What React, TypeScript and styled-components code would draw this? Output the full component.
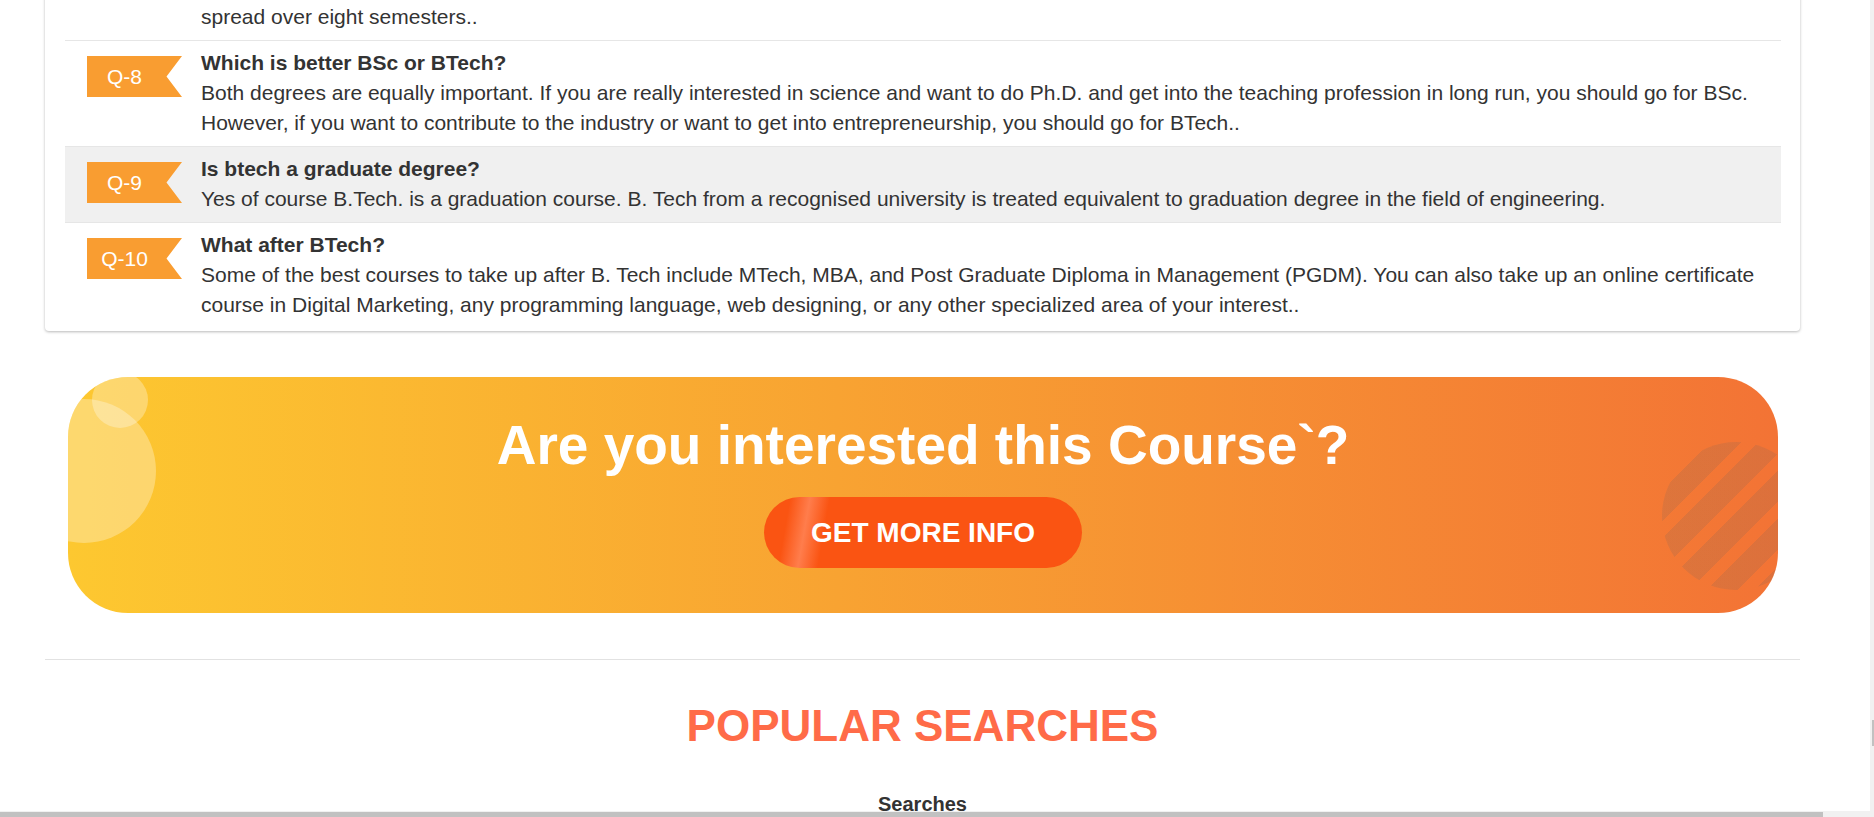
import React from "react";
import styled, { createGlobalStyle } from "styled-components";

const GlobalStyle = createGlobalStyle`
  html, body {
    margin: 0;
    padding: 0;
    background: #ffffff;
    overflow: hidden;
  }
  body {
    font-family: "Liberation Sans", Arial, Helvetica, sans-serif;
    color: #333333;
  }
  * {
    box-sizing: border-box;
  }
`;

const Page = styled.main`
  width: 1755px;
  margin: -65px 0 0 45px;
  display: flex;
  flex-direction: column;
`;

const FaqCard = styled.div`
  background: #ffffff;
  border-radius: 4px;
  box-shadow: 0 1px 3px rgba(0, 0, 0, 0.28);
  padding: 0 19px 3px 20px;
`;

const FaqRow = styled.div<{ $shaded?: boolean }>`
  display: flex;
  align-items: flex-start;
  gap: 19px;
  padding: 7px 20px 8px 22px;
  border-bottom: 1px solid #e6e6e6;
  background: ${(p) => (p.$shaded ? "#f0f0f0" : "transparent")};
  &:last-child {
    border-bottom: none;
  }
`;

const Badge = styled.div`
  flex: 0 0 95px;
  height: 41px;
  margin-top: 8px;
  padding-right: 20px;
  background: #f99d31;
  color: #ffffff;
  font-size: 21px;
  display: flex;
  align-items: center;
  justify-content: center;
  clip-path: polygon(0 0, 100% 0, 83.7% 50%, 100% 100%, 0 100%);
`;

const QText = styled.div`
  flex: 1;
  min-width: 0;
`;

const Question = styled.h3`
  margin: 0;
  font-size: 21px;
  line-height: 30px;
  font-weight: 700;
  color: #333333;
`;

const Answer = styled.p`
  margin: 0;
  font-size: 21px;
  line-height: 30px;
  color: #333333;
`;

const Cta = styled.section`
  position: relative;
  overflow: hidden;
  margin: 46px 22px 0 23px;
  height: 236px;
  border-radius: 60px;
  background: linear-gradient(to right, #fdc830 0%, #f8a332 45%, #f37335 100%);
  display: flex;
  flex-direction: column;
  align-items: center;
  padding-top: 36px;
`;

const Bubble = styled.span<{ $size: number; $left: number; $top: number }>`
  position: absolute;
  width: ${(p) => p.$size}px;
  height: ${(p) => p.$size}px;
  left: ${(p) => p.$left}px;
  top: ${(p) => p.$top}px;
  border-radius: 50%;
  background: rgba(255, 255, 255, 0.3);
`;

const StripedDisc = styled.span`
  position: absolute;
  width: 148px;
  height: 148px;
  right: -32px;
  top: 65px;
  border-radius: 50%;
  background: repeating-linear-gradient(
    135deg,
    rgba(120, 100, 90, 0.18) 0px,
    rgba(120, 100, 90, 0.18) 22px,
    transparent 22px,
    transparent 34px
  );
`;

const CtaTitle = styled.h2`
  position: relative;
  margin: 0 0 20px;
  font-size: 55px;
  font-weight: 700;
  line-height: normal;
  color: #ffffff;
`;

const CtaButton = styled.button`
  position: relative;
  border: none;
  cursor: pointer;
  height: 71px;
  padding: 0 47px;
  border-radius: 36px;
  font-family: "Liberation Sans", Arial, Helvetica, sans-serif;
  font-size: 28px;
  font-weight: 700;
  color: #ffffff;
  background: linear-gradient(
    100deg,
    #fa5412 0%,
    #fa5412 8%,
    #ff7d4c 14%,
    #fa5412 20%,
    #fa5412 100%
  );
`;

const Divider = styled.hr`
  margin: 46px 0 0;
  border: none;
  border-top: 1px solid #e2e2e2;
  height: 0;
`;

const SectionTitle = styled.h2`
  margin: 41px 0 0;
  text-align: center;
  font-size: 44px;
  font-weight: 700;
  line-height: normal;
  color: #ff6b48;
`;

const SubTitle = styled.h4`
  margin: 42px 0 0;
  text-align: center;
  font-size: 20px;
  font-weight: 700;
  line-height: normal;
  color: #333333;
`;

const VTrack = styled.div`
  position: fixed;
  top: 0;
  right: 0;
  width: 4px;
  height: 100%;
  background: #f1f1f1;
`;

const VThumb = styled.div`
  position: absolute;
  right: 0;
  top: 720px;
  width: 2px;
  height: 26px;
  background: #c1c1c1;
`;

const HTrack = styled.div`
  position: fixed;
  left: 0;
  bottom: 0;
  width: 1870px;
  height: 6px;
  background: #f1f1f1;
`;

const HThumb = styled.div`
  position: absolute;
  left: 0;
  bottom: 0;
  width: 1823px;
  height: 5px;
  background: #c1c1c1;
`;

type Faq = { q: string; title: string; lines: string[]; shaded?: boolean };

const faqs: Faq[] = [
  {
    q: "Q-7",
    title: "What is the duration of BTech?",
    lines: [
      "BTech is a four-year undergraduate professional engineering degree programme which is",
      "spread over eight semesters..",
    ],
  },
  {
    q: "Q-8",
    title: "Which is better BSc or BTech?",
    lines: [
      "Both degrees are equally important. If you are really interested in science and want to do Ph.D. and get into the teaching profession in long run, you should go for BSc. However, if you want to contribute to the industry or want to get into entrepreneurship, you should go for BTech..",
    ],
  },
  {
    q: "Q-9",
    title: "Is btech a graduate degree?",
    lines: [
      "Yes of course B.Tech. is a graduation course. B. Tech from a recognised university is treated equivalent to graduation degree in the field of engineering.",
    ],
    shaded: true,
  },
  {
    q: "Q-10",
    title: "What after BTech?",
    lines: [
      "Some of the best courses to take up after B. Tech include MTech, MBA, and Post Graduate Diploma in Management (PGDM). You can also take up an online certificate course in Digital Marketing, any programming language, web designing, or any other specialized area of your interest..",
    ],
  },
];

export default function App() {
  return (
    <>
      <GlobalStyle />
      <Page>
        <FaqCard>
          {faqs.map((f) => (
            <FaqRow key={f.q} $shaded={f.shaded}>
              <Badge>{f.q}</Badge>
              <QText>
                <Question>{f.title}</Question>
                {f.lines.map((l, i) => (
                  <Answer key={i}>{l}</Answer>
                ))}
              </QText>
            </FaqRow>
          ))}
        </FaqCard>

        <Cta>
          <Bubble $size={144} $left={-56} $top={22} />
          <Bubble $size={56} $left={24} $top={-5} />
          <StripedDisc />
          <CtaTitle>Are you interested this Course`?</CtaTitle>
          <CtaButton>GET MORE INFO</CtaButton>
        </Cta>

        <Divider />
        <SectionTitle>POPULAR SEARCHES</SectionTitle>
        <SubTitle>Searches</SubTitle>
      </Page>
      <VTrack>
        <VThumb />
      </VTrack>
      <HTrack>
        <HThumb />
      </HTrack>
    </>
  );
}
